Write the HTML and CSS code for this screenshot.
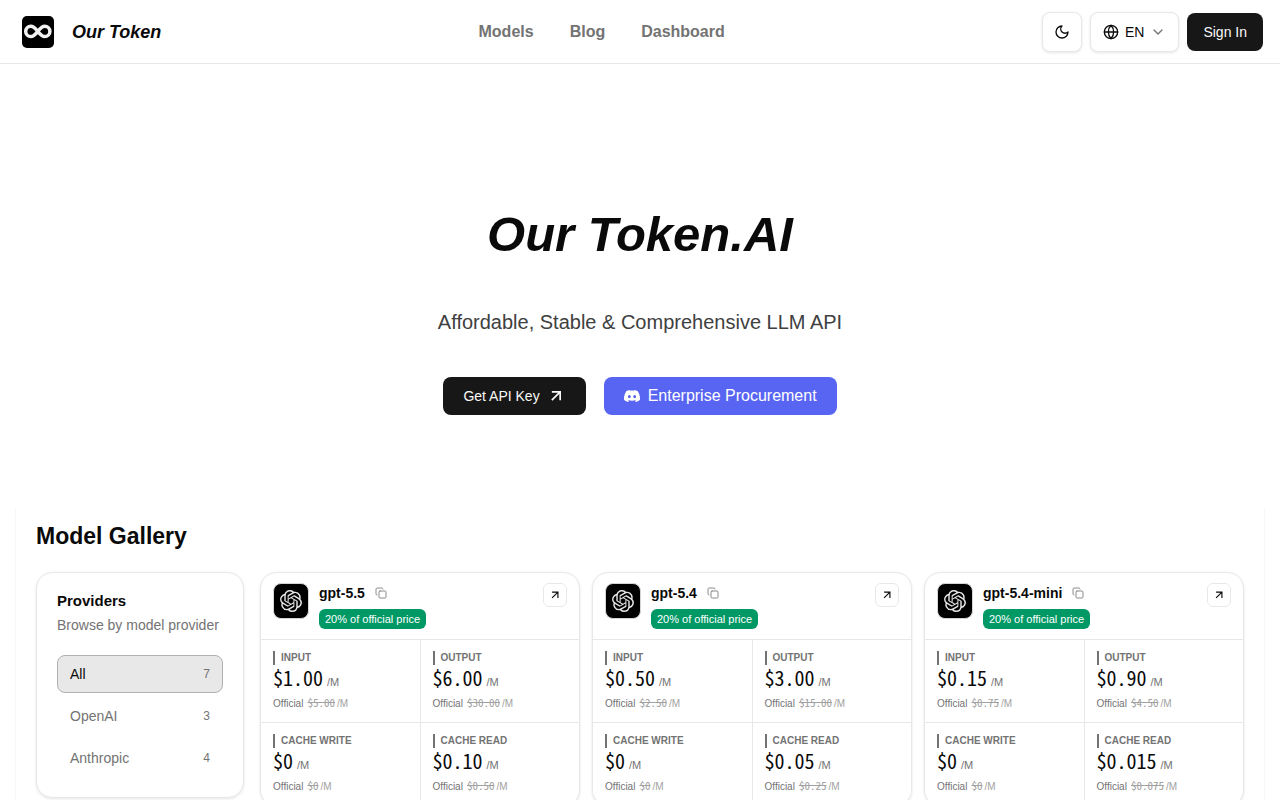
FILE: index.html
```html
<!DOCTYPE html>
<html lang="en">
<head>
<meta charset="utf-8">
<meta name="viewport" content="width=device-width, initial-scale=1">
<title>Our Token</title>
<link rel="stylesheet" href="styles.css">
</head>
<body>
<svg class="sprite" aria-hidden="true">
  <symbol id="openai" viewBox="0 0 24 24"><path d="M22.2819 9.8211a5.9847 5.9847 0 0 0-.5157-4.9108 6.0462 6.0462 0 0 0-6.5098-2.9A6.0651 6.0651 0 0 0 4.9807 4.1818a5.9847 5.9847 0 0 0-3.9977 2.9 6.0462 6.0462 0 0 0 .7427 7.0966 5.98 5.98 0 0 0 .511 4.9107 6.051 6.051 0 0 0 6.5146 2.9001A5.9847 5.9847 0 0 0 13.2599 24a6.0557 6.0557 0 0 0 5.7718-4.2058 5.9894 5.9894 0 0 0 3.9977-2.9001 6.0557 6.0557 0 0 0-.7475-7.0729zm-9.022 12.6081a4.4755 4.4755 0 0 1-2.8764-1.0408l.1419-.0804 4.7783-2.7582a.7948.7948 0 0 0 .3927-.6813v-6.7369l2.02 1.1686a.071.071 0 0 1 .038.052v5.5826a4.504 4.504 0 0 1-4.4945 4.4944zm-9.6607-4.1254a4.4708 4.4708 0 0 1-.5346-3.0137l.142.0852 4.783 2.7582a.7712.7712 0 0 0 .7806 0l5.8428-3.3685v2.3324a.0804.0804 0 0 1-.0332.0615L9.74 19.9502a4.4992 4.4992 0 0 1-6.1408-1.6464zM2.3408 7.8956a4.485 4.485 0 0 1 2.3655-1.9728V11.6a.7664.7664 0 0 0 .3879.6765l5.8144 3.3543-2.0201 1.1685a.0757.0757 0 0 1-.071 0l-4.8303-2.7865A4.504 4.504 0 0 1 2.3408 7.872zm16.5963 3.8558L13.1038 8.364 15.1192 7.2a.0757.0757 0 0 1 .071 0l4.8303 2.7913a4.4944 4.4944 0 0 1-.6765 8.1042v-5.6772a.79.79 0 0 0-.407-.667zm2.0107-3.0231l-.142-.0852-4.7735-2.7818a.7759.7759 0 0 0-.7854 0L9.409 9.2297V6.8974a.0662.0662 0 0 1 .0284-.0615l4.8303-2.7866a4.4992 4.4992 0 0 1 6.6802 4.66zM8.3065 12.863l-2.02-1.1638a.0804.0804 0 0 1-.038-.0567V6.0742a4.4992 4.4992 0 0 1 7.3757-3.4537l-.142.0805L8.704 5.459a.7948.7948 0 0 0-.3927.6813zm1.0976-2.3654l2.602-1.4998 2.6069 1.4998v2.9994l-2.5974 1.4997-2.6067-1.4997Z" fill="currentColor"/></symbol>
  <symbol id="copy" viewBox="0 0 24 24"><rect x="8" y="8" width="14" height="14" rx="2"/><path d="M4 16c-1.1 0-2-.9-2-2V4c0-1.1.9-2 2-2h10c1.1 0 2 .9 2 2"/></symbol>
  <symbol id="arrow" viewBox="0 0 24 24"><path d="M7 7h10v10M7 17 17 7"/></symbol>
</svg>

<header class="topbar">
  <a class="brand" href="#">
    <svg class="brand-mark" viewBox="0 0 32 32" aria-hidden="true"><rect width="32" height="32" rx="5"/><path d="M15.800 15.400c-2.600-3.200-4.100-5.200-6.900-5.200a5.200 5.200 0 0 0 0 10.400c2.800 0 4.300-2 6.900-5.200s4.100-5.200 6.900-5.200a5.200 5.200 0 0 1 0 10.400c-2.800 0-4.300-2-6.900-5.200z"/></svg>
    <span class="brand-name">Our Token</span>
  </a>
  <nav class="nav">
    <a href="#">Models</a>
    <a href="#">Blog</a>
    <a href="#">Dashboard</a>
  </nav>
  <div class="actions">
    <button class="control control-square" type="button" aria-label="Dark mode">
      <svg class="line icon-16" viewBox="0 0 24 24"><path d="M12 3a6 6 0 0 0 9 9 9 9 0 1 1-9-9Z"/></svg>
    </button>
    <button class="control" type="button">
      <svg class="line icon-16" viewBox="0 0 24 24"><circle cx="12" cy="12" r="10"/><path d="M12 2a14.500 14.500 0 0 0 0 20 14.500 14.500 0 0 0 0-20M2 12h20"/></svg>
      <span>EN</span>
      <svg class="line icon-16 muted" viewBox="0 0 24 24"><path d="m6 9 6 6 6-6"/></svg>
    </button>
    <button class="solid" type="button">Sign In</button>
  </div>
</header>

<main>
  <section class="hero">
    <h1>Our Token.AI</h1>
    <p class="tagline">Affordable, Stable &amp; Comprehensive LLM API</p>
    <div class="cta">
      <a class="cta-button cta-key" href="#">Get API Key
        <svg class="line cta-arrow"><use href="#arrow"/></svg>
      </a>
      <a class="cta-button cta-discord" href="#">
        <svg class="icon-16" viewBox="0 0 24 24" fill="currentColor"><path d="M20.317 4.3698a19.7913 19.7913 0 0 0-4.8851-1.5152.0741.0741 0 0 0-.0785.0371c-.211.3753-.4447.8648-.6083 1.2495-1.8447-.2762-3.68-.2762-5.4868 0-.1636-.3933-.4058-.8742-.6177-1.2495a.077.077 0 0 0-.0785-.037 19.7363 19.7363 0 0 0-4.8852 1.515.0699.0699 0 0 0-.0321.0277C.5334 9.0458-.319 13.5799.0992 18.0578a.0824.0824 0 0 0 .0312.0561c2.0528 1.5076 4.0413 2.4228 5.9929 3.0294a.0777.0777 0 0 0 .0842-.0276c.4616-.6304.8731-1.2952 1.226-1.9942a.076.076 0 0 0-.0416-.1057c-.6528-.2476-1.2743-.5495-1.8722-.8923a.077.077 0 0 1-.0076-.1277c.1258-.0943.2517-.1923.3718-.2914a.0743.0743 0 0 1 .0776-.0105c3.9278 1.7933 8.18 1.7933 12.0614 0a.0739.0739 0 0 1 .0785.0095c.1202.099.246.1981.3728.2924a.077.077 0 0 1-.0066.1276 12.2986 12.2986 0 0 1-1.873.8914.0766.0766 0 0 0-.0407.1067c.3604.698.7719 1.3628 1.225 1.9932a.076.076 0 0 0 .0842.0286c1.961-.6067 3.9495-1.5219 6.0023-3.0294a.077.077 0 0 0 .0313-.0552c.5004-5.177-.8382-9.6739-3.5485-13.6604a.061.061 0 0 0-.0312-.0286zM8.02 15.3312c-1.1825 0-2.1569-1.0857-2.1569-2.419 0-1.3332.9555-2.4189 2.157-2.4189 1.2108 0 2.1757 1.0952 2.1568 2.419 0 1.3332-.9555 2.4189-2.1569 2.4189zm7.9748 0c-1.1825 0-2.1569-1.0857-2.1569-2.419 0-1.3332.9554-2.4189 2.1569-2.4189 1.2108 0 2.1757 1.0952 2.1568 2.419 0 1.3332-.946 2.4189-2.1568 2.4189Z"/></svg>
        Enterprise Procurement
      </a>
    </div>
  </section>

  <section class="gallery">
    <h2>Model Gallery</h2>
    <div class="gallery-body">
      <aside class="panel providers">
        <h3>Providers</h3>
        <p>Browse by model provider</p>
        <div class="provider-list">
          <button class="provider provider-active" type="button"><span>All</span><span class="count">7</span></button>
          <button class="provider" type="button"><span>OpenAI</span><span class="count">3</span></button>
          <button class="provider" type="button"><span>Anthropic</span><span class="count">4</span></button>
        </div>
      </aside>

      <div class="cards">
        <article class="panel card">
          <div class="card-head">
            <span class="avatar"><svg><use href="#openai"/></svg></span>
            <div class="card-title">
              <div class="name-row"><h3>gpt-5.5</h3><button class="copy" type="button" aria-label="Copy name"><svg class="line"><use href="#copy"/></svg></button></div>
              <span class="badge">20% of official price</span>
            </div>
            <a class="open" href="#" aria-label="Open gpt-5.5"><svg class="line"><use href="#arrow"/></svg></a>
          </div>
          <dl class="prices">
            <div class="cell"><dt>INPUT</dt><dd class="price"><b>$1.00</b> /M</dd><dd class="official">Official <span><s>$5.00</s>/M</span></dd></div>
            <div class="cell"><dt>OUTPUT</dt><dd class="price"><b>$6.00</b> /M</dd><dd class="official">Official <span><s>$30.00</s>/M</span></dd></div>
            <div class="cell"><dt>CACHE WRITE</dt><dd class="price"><b>$0</b> /M</dd><dd class="official">Official <span><s>$0</s>/M</span></dd></div>
            <div class="cell"><dt>CACHE READ</dt><dd class="price"><b>$0.10</b> /M</dd><dd class="official">Official <span><s>$0.50</s>/M</span></dd></div>
          </dl>
        </article>

        <article class="panel card">
          <div class="card-head">
            <span class="avatar"><svg><use href="#openai"/></svg></span>
            <div class="card-title">
              <div class="name-row"><h3>gpt-5.4</h3><button class="copy" type="button" aria-label="Copy name"><svg class="line"><use href="#copy"/></svg></button></div>
              <span class="badge">20% of official price</span>
            </div>
            <a class="open" href="#" aria-label="Open gpt-5.4"><svg class="line"><use href="#arrow"/></svg></a>
          </div>
          <dl class="prices">
            <div class="cell"><dt>INPUT</dt><dd class="price"><b>$0.50</b> /M</dd><dd class="official">Official <span><s>$2.50</s>/M</span></dd></div>
            <div class="cell"><dt>OUTPUT</dt><dd class="price"><b>$3.00</b> /M</dd><dd class="official">Official <span><s>$15.00</s>/M</span></dd></div>
            <div class="cell"><dt>CACHE WRITE</dt><dd class="price"><b>$0</b> /M</dd><dd class="official">Official <span><s>$0</s>/M</span></dd></div>
            <div class="cell"><dt>CACHE READ</dt><dd class="price"><b>$0.05</b> /M</dd><dd class="official">Official <span><s>$0.25</s>/M</span></dd></div>
          </dl>
        </article>

        <article class="panel card">
          <div class="card-head">
            <span class="avatar"><svg><use href="#openai"/></svg></span>
            <div class="card-title">
              <div class="name-row"><h3>gpt-5.4-mini</h3><button class="copy" type="button" aria-label="Copy name"><svg class="line"><use href="#copy"/></svg></button></div>
              <span class="badge">20% of official price</span>
            </div>
            <a class="open" href="#" aria-label="Open gpt-5.4-mini"><svg class="line"><use href="#arrow"/></svg></a>
          </div>
          <dl class="prices">
            <div class="cell"><dt>INPUT</dt><dd class="price"><b>$0.15</b> /M</dd><dd class="official">Official <span><s>$0.75</s>/M</span></dd></div>
            <div class="cell"><dt>OUTPUT</dt><dd class="price"><b>$0.90</b> /M</dd><dd class="official">Official <span><s>$4.50</s>/M</span></dd></div>
            <div class="cell"><dt>CACHE WRITE</dt><dd class="price"><b>$0</b> /M</dd><dd class="official">Official <span><s>$0</s>/M</span></dd></div>
            <div class="cell"><dt>CACHE READ</dt><dd class="price"><b>$0.015</b> /M</dd><dd class="official">Official <span><s>$0.075</s>/M</span></dd></div>
          </dl>
        </article>
      </div>
    </div>
  </section>
</main>
</body>
</html>
```
FILE: styles.css
```css
:root {
  --ink: #0a0a0a;
  --muted: #737373;
  --line: #e8e8e8;
  --solid: #171717;
  --shadow: 0 1px 3px rgba(0, 0, 0, 0.1);
}

* { box-sizing: border-box; }

body {
  margin: 0;
  background: #fff;
  color: var(--ink);
  font-family: "Liberation Sans", Arial, sans-serif;
  font-size: 14px;
  line-height: 20px;
}

h1, h2, h3, p, dl, dd { margin: 0; }
a { color: inherit; text-decoration: none; }
button { font: inherit; color: inherit; cursor: pointer; }
svg { display: block; flex: none; }

.sprite { display: none; }
.line { fill: none; stroke: currentColor; stroke-width: 2; stroke-linecap: round; stroke-linejoin: round; }
.icon-16 { width: 16px; height: 16px; }
.muted { color: var(--muted); }

/* Header */
.topbar {
  display: flex;
  align-items: center;
  justify-content: space-between;
  height: 64px;
  padding: 0 17px 0 22px;
  border-bottom: 1px solid var(--line);
}
.brand { display: flex; align-items: center; gap: 18px; }
.brand-mark { width: 32px; height: 32px; }
.brand-mark path { fill: none; stroke: #f2f2f2; stroke-width: 3.5; }
.brand-name { font-size: 18px; font-weight: 700; font-style: italic; }
.nav { display: flex; gap: 36px; color: var(--muted); font-size: 16px; font-weight: 700; }
.actions { display: flex; align-items: center; gap: 8px; }
.control {
  display: flex;
  align-items: center;
  justify-content: center;
  gap: 6px;
  height: 40px;
  padding: 0 12px;
  background: #fff;
  border: 1px solid var(--line);
  border-radius: 8px;
  box-shadow: var(--shadow);
}
.control-square { width: 40px; padding: 0; }
.solid {
  height: 38px;
  padding: 0 16px;
  background: var(--solid);
  color: #fafafa;
  border: 0;
  border-radius: 8px;
}

/* Hero */
.hero {
  display: flex;
  flex-direction: column;
  align-items: center;
  padding: 140px 20px 93px;
  text-align: center;
}
h1 { font-size: 49px; line-height: 60px; font-style: italic; }
.tagline { margin-top: 44px; color: #404040; font-size: 20px; line-height: 28px; }
.cta { display: flex; gap: 18px; margin-top: 41px; }
.cta-button {
  display: flex;
  align-items: center;
  gap: 8px;
  height: 38px;
  padding: 0 20px;
  border-radius: 8px;
  background: var(--solid);
  color: #fafafa;
}
.cta-key { gap: 6px; }
.cta-arrow { width: 20px; height: 20px; stroke-linecap: butt; stroke-linejoin: miter; }
.cta-discord { background: #5865f2; color: #fff; font-size: 16px; }

/* Gallery */
.gallery {
  margin: 0 15px;
  padding: 12px 20px 20px;
  border: solid #f7f7f7;
  border-width: 0 1px;
}
h2 { font-size: 23px; line-height: 32px; }
.gallery-body {
  display: grid;
  grid-template-columns: 208px 1fr;
  align-items: start;
  gap: 16px;
  margin-top: 20px;
}
.panel {
  background: #fff;
  border: 1px solid var(--line);
  border-radius: 16px;
  box-shadow: var(--shadow);
}
.providers { padding: 20px; }
.providers h3 { font-size: 15px; line-height: 16px; }
.providers p { margin-top: 6px; color: var(--muted); white-space: nowrap; }
.provider-list { display: flex; flex-direction: column; gap: 4px; margin-top: 20px; }
.provider {
  display: flex;
  align-items: center;
  justify-content: space-between;
  height: 38px;
  padding: 0 12px;
  background: none;
  border: 1px solid transparent;
  border-radius: 8px;
  color: var(--muted);
}
.provider-active { background: #e8e8e8; border-color: #b0b0b0; color: var(--ink); }
.count { color: var(--muted); font-size: 12px; }

.cards { display: grid; grid-template-columns: repeat(3, 1fr); gap: 12px; }
.card { overflow: hidden; }
.card-head { display: flex; gap: 10px; padding: 10px 12px; }
.avatar {
  display: grid;
  place-items: center;
  width: 36px;
  height: 36px;
  background: #000;
  border: 1px solid #d4d4d4;
  border-radius: 8px;
  color: #e5e5e5;
}
.avatar svg { width: 22px; height: 22px; }
.card-title { flex: 1; }
.name-row { display: flex; align-items: center; gap: 10px; height: 20px; }
.name-row h3 { font-size: 14px; line-height: 18px; }
.copy { padding: 0; background: none; border: 0; color: #8c8c8c; }
.copy svg { width: 12px; height: 12px; }
.badge {
  display: inline-block;
  margin-top: 6px;
  padding: 0 6px;
  background: #009966;
  border-radius: 6px;
  color: #fff;
  font-size: 11px;
  line-height: 20px;
  vertical-align: top;
}
.open {
  display: grid;
  place-items: center;
  width: 24px;
  height: 24px;
  border: 1px solid var(--line);
  border-radius: 6px;
}
.open svg { width: 14px; height: 14px; stroke-linecap: butt; stroke-linejoin: miter; }

.prices {
  display: grid;
  grid-template-columns: 1fr 1fr;
  gap: 1px;
  background: var(--line);
  border-top: 1px solid var(--line);
}
.cell { padding: 11px 12px; background: #fff; }
.cell dt {
  padding-left: 6px;
  border-left: 2px solid var(--muted);
  color: var(--muted);
  font-size: 10px;
  font-weight: 700;
  line-height: 14px;
}
.price {
  display: flex;
  align-items: baseline;
  gap: 4px;
  color: var(--muted);
  font-size: 11px;
  line-height: 14px;
}
.price b, s { font-family: "Noto Sans Mono CJK SC", "Noto Sans Mono CJK JP", monospace; }
.price b { color: var(--ink); font-size: 20px; font-weight: 400; line-height: 26px; }
.official {
  display: flex;
  align-items: baseline;
  gap: 4px;
  height: 14px;
  margin-top: 6px;
  color: var(--muted);
  font-size: 10px;
  line-height: 14px;
}
.official span { color: #a1a1a1; }
.official s { margin-right: 2px; font-size: 11px; line-height: 10px; }
```
